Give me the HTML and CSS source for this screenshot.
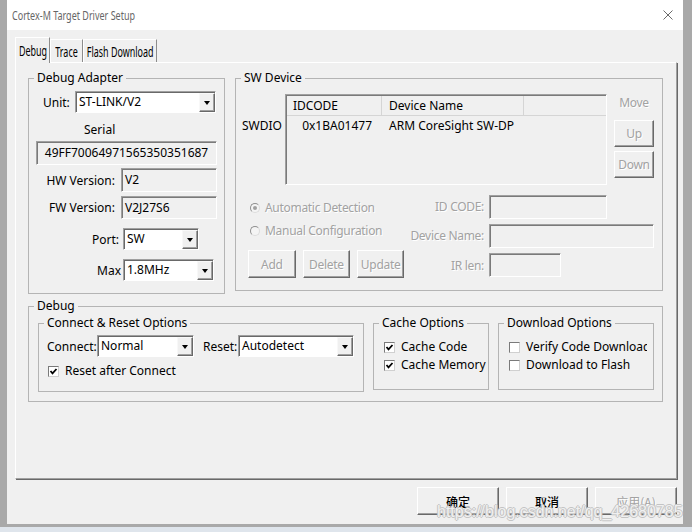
FILE: index.html
```html
<!DOCTYPE html>
<html>
<head>
<meta charset="utf-8">
<title>Cortex-M Target Driver Setup</title>
<link rel="stylesheet" href="styles.css">
</head>
<body>
<div class="screen">
  <div class="frame">
    <div class="window">
      <div class="titlebar">
        <span class="title">Cortex-M Target Driver Setup</span>
        <svg class="close" viewBox="0 0 10 10"><path d="M0.5 0.5 L9.5 9.5 M9.5 0.5 L0.5 9.5" stroke="#6a6a6a" stroke-width="1" fill="none"/></svg>
      </div>
      <div class="body">
        <div class="tabs">
          <div class="tab sel t-debug"><span>Debug</span></div>
          <div class="tab t-trace"><span>Trace</span></div>
          <div class="tab t-flash"><span>Flash Download</span></div>
        </div>
        <div class="panel">
          <div class="row1">
            <div class="group da">
              <span class="legend">Debug Adapter</span>
              <div class="unit-row">
                <span class="unit-lbl">Unit:</span>
                <div class="combo w-unit"><span class="val">ST-LINK/V2</span><span class="drop"></span></div>
              </div>
              <div class="serial-lbl">Serial</div>
              <div class="field serial">49FF70064971565350351687</div>
              <div class="frow hw"><span class="flbl">HW Version:</span><div class="field w-ver">V2</div></div>
              <div class="frow fw"><span class="flbl">FW Version:</span><div class="field w-ver h23">V2J27S6</div></div>
              <div class="frow port"><span class="flbl pr4">Port:</span><div class="combo w-port"><span class="val">SW</span><span class="drop"></span></div></div>
              <div class="frow max"><span class="flbl pr2">Max</span><div class="combo w-max h23"><span class="val">1.8MHz</span><span class="drop"></span></div></div>
            </div>
            <div class="group sw">
              <span class="legend">SW Device</span>
              <div class="swtop">
                <span class="swdio">SWDIO</span>
                <div class="list">
                  <div class="lh">
                    <span class="c1 hc">IDCODE</span>
                    <span class="c2 hc">Device Name</span>
                    <span class="c3"></span>
                  </div>
                  <div class="lr">
                    <span class="c1 rc">0x1BA01477</span>
                    <span class="c2 rc2">ARM CoreSight SW-DP</span>
                  </div>
                </div>
                <div class="move">
                  <span class="move-lbl dis">Move</span>
                  <div class="btn mv up dis">Up</div>
                  <div class="btn mv down dis">Down</div>
                </div>
              </div>
              <div class="swlow">
                <div class="swleft">
                  <div class="rrow r1 dis"><span class="radio on"></span>Automatic Detection</div>
                  <div class="rrow r2 dis"><span class="radio"></span>Manual Configuration</div>
                  <div class="btnrow">
                    <div class="btn b-add dis">Add</div>
                    <div class="btn b-del dis">Delete</div>
                    <div class="btn b-upd dis">Update</div>
                  </div>
                </div>
                <div class="swright">
                  <span class="glbl dis">ID CODE:</span><div class="field w-id"></div>
                  <span class="glbl dis">Device Name:</span><div class="field w-dn"></div>
                  <span class="glbl dis">IR len:</span><div class="field w-ir"></div>
                </div>
              </div>
            </div>
          </div>
          <div class="group dbg">
            <span class="legend">Debug</span>
            <div class="dbg-row">
              <div class="group cr">
                <span class="legend">Connect &amp; Reset Options</span>
                <div class="conn-row">
                  <span class="conn-lbl">Connect:</span>
                  <div class="combo w-conn"><span class="val">Normal</span><span class="drop"></span></div>
                  <span class="reset-lbl">Reset:</span>
                  <div class="combo w-reset"><span class="val">Autodetect</span><span class="drop"></span></div>
                </div>
                <div class="crow rac"><span class="cb"><svg viewBox="0 0 9 9"><polyline points="1.5,4 3.5,6.3 7.5,2" fill="none" stroke="#000" stroke-width="1.8"/></svg></span>Reset after Connect</div>
              </div>
              <div class="group cache">
                <span class="legend">Cache Options</span>
                <div class="clist">
                  <div class="crow"><span class="cb"><svg viewBox="0 0 9 9"><polyline points="1.5,4 3.5,6.3 7.5,2" fill="none" stroke="#000" stroke-width="1.8"/></svg></span>Cache Code</div>
                  <div class="crow"><span class="cb"><svg viewBox="0 0 9 9"><polyline points="1.5,4 3.5,6.3 7.5,2" fill="none" stroke="#000" stroke-width="1.8"/></svg></span>Cache Memory</div>
                </div>
              </div>
              <div class="group dl">
                <span class="legend">Download Options</span>
                <div class="clist">
                  <div class="crow clip"><span class="cb"></span>Verify Code Download</div>
                  <div class="crow clip"><span class="cb"></span>Download to Flash</div>
                </div>
              </div>
            </div>
          </div>
        </div>
        <div class="actions">
          <div class="btn act">确定</div>
          <div class="btn act">取消</div>
          <div class="btn act dis">应用(A)</div>
        </div>
      </div>
    </div>
  </div>
  <div class="strip"></div>
  <div class="watermark">https://blog.csdn.net/qq_42680785</div>
</div>
</body>
</html>
```
FILE: styles.css
```css
* { box-sizing: border-box; }
html, body { margin: 0; padding: 0; }
body {
  font-family: "Noto Sans", "Open Sans", sans-serif;
  font-size: 12px;
  color: #000;
  background: #dfe5ec;
}
.screen { position: relative; width: 692px; height: 532px; overflow: hidden; }
.frame { height: 527px; background: #a9a9a9; padding-left: 7px; }
.strip { height: 5px; background: #dfe5ec; }
.window {
  width: 676px; height: 524px;
  display: flex; flex-direction: column;
  background: #f0f0f0;
}
.titlebar {
  height: 30px; flex: none; background: #fff;
  display: flex; align-items: center;
  padding: 0 10px 0 5px;
}
.title {
  display: inline-block; font-size: 12.5px; color: #666;
  white-space: nowrap; transform: scaleX(0.72); transform-origin: left center;
}
.close { margin-left: auto; width: 10px; height: 10px; }
.body { flex: 1; padding: 7px 6px 0 8px; }

/* tabs */
.tabs { display: flex; align-items: flex-end; height: 25px; position: relative; z-index: 1; }
.tab {
  height: 23px; background: #f0f0f0;
  border-style: solid; border-width: 1px 1px 0 1px;
  border-color: #fff #8c8c8c #fff #fff;
  display: flex; align-items: center; justify-content: center;
}
.tab span { display: inline-block; font-size: 14px; white-space: nowrap; transform: scaleX(0.64); }
.tab.sel { height: 26px; margin-bottom: -1px; }
.t-debug { width: 35px; }
.t-trace { width: 33px; }
.t-flash { width: 74px; }

.panel {
  width: 662px; height: 417px;
  border-style: solid; border-width: 1px;
  border-color: #fff #a0a0a0 #a0a0a0 #fff;
  box-shadow: 1px 1px 0 #696969;
  padding: 15px 0 0 12px;
}

/* groups */
.group { position: relative; border: 1px solid #b4b4b4; }
.legend {
  position: absolute; top: -9px; left: 5px;
  padding: 0 3px; background: #f0f0f0;
  line-height: 16px; white-space: nowrap;
}
.row1 { display: flex; align-items: flex-start; gap: 10px; }

/* common controls */
.field {
  height: 24px; background: #f0f0f0;
  border: 1px solid; border-color: #a0a0a0 #fff #fff #a0a0a0;
  box-shadow: inset 1px 1px 0 #7a7a7a;
  padding: 1px 0 0 3px; line-height: 20px; white-space: nowrap;
}
.h23 { height: 23px; }
.combo {
  height: 22px; background: #fff; display: flex;
  border: 1px solid; border-color: #a0a0a0 #fff #fff #a0a0a0;
  box-shadow: inset 1px 1px 0 #696969;
  padding: 1px 0 0 1px;
}
.combo .val { flex: 1; padding-left: 2px; line-height: 18px; white-space: nowrap; overflow: hidden; }
.drop {
  width: 16px; flex: none; background: #f0f0f0;
  border: 1px solid; border-color: #f8f8f8 #696969 #696969 #f8f8f8;
  box-shadow: inset -1px -1px 0 #a0a0a0;
  display: flex; align-items: center; justify-content: center;
}
.drop::after {
  content: ""; width: 0; height: 0;
  border-left: 3.5px solid transparent; border-right: 3.5px solid transparent;
  border-top: 4px solid #000;
}
.btn {
  background: #f0f0f0;
  border: 1px solid; border-color: #fff #696969 #696969 #fff;
  box-shadow: inset -1px -1px 0 #a0a0a0;
  display: flex; align-items: center; justify-content: center;
  white-space: nowrap;
}
.dis { color: #a2a2a2; text-shadow: 1px 1px 0 #fff; letter-spacing: -0.3px; }

/* Debug Adapter */
.da { width: 197px; height: 216px; }
.unit-row { display: flex; align-items: center; margin-top: 12px; padding-left: 14px; }
.unit-lbl { width: 32px; }
.w-unit { width: 141px; }
.serial-lbl { margin-top: 8px; padding-left: 55px; line-height: 18px; height: 18px; }
.serial { margin: 2px 0 0 7px; width: 181px; text-align: center; padding-left: 0; }
.frow { display: flex; align-items: center; }
.flbl { width: 92px; padding-right: 6px; text-align: right; white-space: nowrap; }
.flbl.pr4 { width: 94px; padding-right: 4px; }
.flbl.pr2 { width: 94px; padding-right: 2px; }
.hw { margin-top: 3px; }
.fw { margin-top: 4px; }
.port { margin-top: 9px; }
.max { margin-top: 9px; }
.w-ver { width: 96px; }
.w-port { width: 76px; }
.w-max { width: 91px; }

/* SW Device */
.sw { width: 428px; height: 213px; }
.swtop { display: flex; margin-top: 15px; padding-left: 6px; }
.swdio { width: 43px; margin-top: 24px; line-height: 16px; }
.list {
  width: 322px; height: 91px;
  border: 1px solid; border-color: #a0a0a0 #fff #fff #a0a0a0;
  box-shadow: inset 1px 1px 0 #7a7a7a;
  padding: 1px 0 0 1px;
}
.lh { display: flex; height: 20px; border-bottom: 1px solid #d5d5d5; }
.lr { display: flex; height: 20px; line-height: 20px; }
.c1 { width: 95px; flex: none; white-space: nowrap; }
.c2 { width: 142px; flex: none; white-space: nowrap; }
.c3 { flex: 1; }
.hc { line-height: 19px; border-right: 1px solid #d5d5d5; }
.lh .c1 { padding-left: 6px; }
.lh .c2 { padding-left: 7px; }
.rc { text-align: right; padding-right: 10px; }
.rc2 { padding-left: 7px; }
.move { margin-left: 7px; width: 40px; display: flex; flex-direction: column; }
.move-lbl { margin-top: 1px; line-height: 16px; text-align: center; }
.mv { width: 40px; height: 27px; }
.up { margin-top: 9px; }
.down { margin-top: 4px; }

.swlow { display: flex; margin-top: 9px; }
.swleft { width: 168px; padding-left: 12px; }
.rrow { display: flex; align-items: center; height: 18px; line-height: 18px; white-space: nowrap; }
.r1 { margin-top: 5px; }
.r2 { margin-top: 5px; }
.radio {
  width: 10px; height: 10px; border-radius: 50%; flex: none;
  border: 1px solid; border-color: #8f8f8f #dcdcdc #dcdcdc #8f8f8f;
  background: #f4f4f4;
  display: inline-flex; align-items: center; justify-content: center;
  margin: 0 5px 0 2px;
}
.radio.on::after { content: ""; width: 4px; height: 4px; border-radius: 50%; background: #a0a0a0; }
.btnrow { display: flex; gap: 7px; margin-top: 10px; }
.b-add { width: 53px; height: 28px; }
.b-del { width: 53px; height: 28px; }
.b-upd { width: 52px; height: 28px; }
.swright {
  display: grid; grid-template-columns: 80px auto;
  column-gap: 5px; row-gap: 4px; align-items: center; justify-items: start;
}
.glbl { justify-self: end; white-space: nowrap; }
.w-id { width: 118px; }
.w-dn { width: 165px; }
.w-ir { width: 72px; }

/* Debug group */
.dbg { width: 635px; height: 96px; margin-top: 12px; }
.dbg-row { display: flex; align-items: flex-start; gap: 9px; margin-top: 16px; padding-left: 9px; }
.cr { width: 326px; height: 69px; }
.cache { width: 116px; height: 67px; }
.dl { width: 156px; height: 67px; }
.conn-row { display: flex; align-items: center; margin-top: 11px; padding-left: 8px; }
.conn-lbl { width: 50px; }
.w-conn { width: 97px; }
.reset-lbl { width: 35px; margin-left: 9px; }
.w-reset { width: 116px; }
.crow { display: flex; align-items: center; height: 18px; line-height: 18px; white-space: nowrap; }
.rac { margin-top: 5px; padding-left: 9px; }
.clist { margin-top: 14px; padding-left: 10px; }
.clip { width: 138px; overflow: hidden; }
.cb {
  width: 11px; height: 11px; flex: none; margin-right: 6px;
  border: 1px solid; border-color: #7a7a7a #d0d0d0 #d0d0d0 #7a7a7a;
  background: #fff; display: flex; align-items: center; justify-content: center;
}
.cb svg { width: 9px; height: 9px; display: block; }

/* bottom buttons */
.actions { display: flex; justify-content: flex-end; gap: 7px; margin-top: 8px; }
.act {
  width: 82px; height: 28px;
  font-family: "Noto Sans CJK SC", "Noto Sans", sans-serif; font-size: 12px; font-weight: 500;
}
.act.dis { letter-spacing: 0; font-weight: 400; }

.watermark {
  position: absolute; left: 437px; top: 503px;
  font-family: "Liberation Sans", Arial, sans-serif; font-size: 16px; line-height: 18px;
  color: rgba(255,255,255,0.75);
  text-shadow: -1px 0 #c4c4c4, 1px 0 #c4c4c4, 0 -1px #c4c4c4, 0 1px #c4c4c4;
  white-space: nowrap; pointer-events: none;
}
```
